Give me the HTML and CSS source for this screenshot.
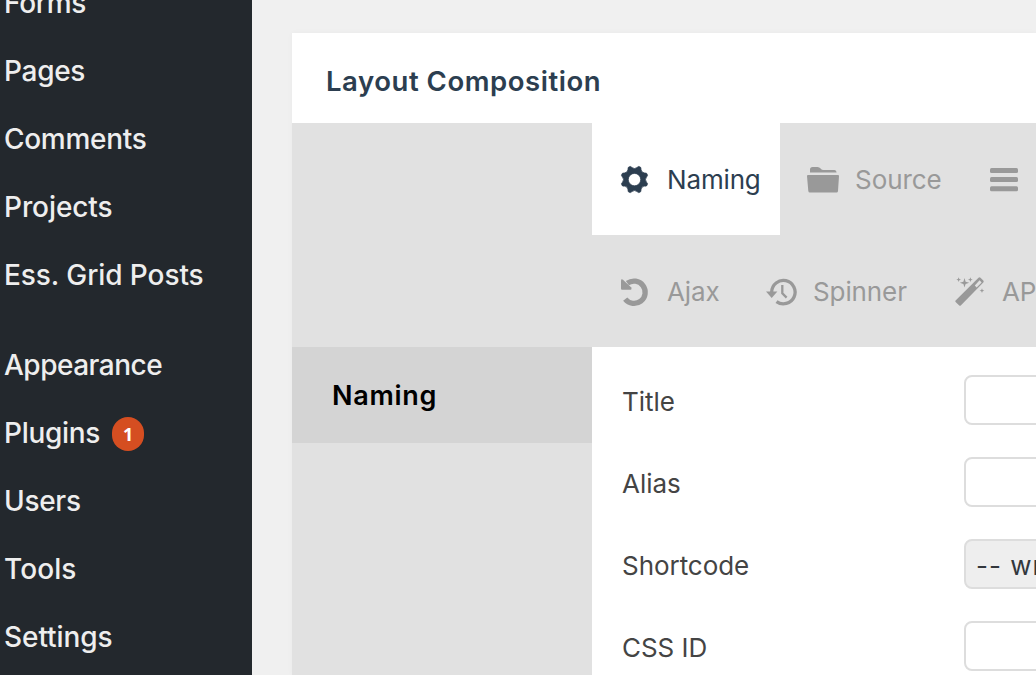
FILE: index.html
```html
<!DOCTYPE html>
<html lang="en">
<head>
<meta charset="utf-8">
<title>Layout Composition</title>
<link rel="stylesheet" href="styles.css">
</head>
<body>
<div class="app">
  <nav class="sidebar">
    <a class="menu-item">Forms</a>
    <a class="menu-item">Pages</a>
    <a class="menu-item">Comments</a>
    <a class="menu-item loose">Projects</a>
    <a class="menu-item loose">Ess. Grid Posts</a>
    <div class="menu-gap"></div>
    <a class="menu-item tight">Appearance</a>
    <a class="menu-item">Plugins <span class="count">1</span></a>
    <a class="menu-item">Users</a>
    <a class="menu-item tools">Tools</a>
    <a class="menu-item loose">Settings</a>
  </nav>
  <main class="content">
    <section class="panel">
      <h1 class="panel-title">Layout Composition</h1>
      <div class="tabs">
        <div class="tab-row">
          <div class="tab tab-active">
            <svg class="icon gear" viewBox="0 0 32 32"><path fill-rule="evenodd" d="M10.2 2.8Q11.7 1.8 12.9 3.5Q15.5 5.6 18.1 3.5Q19.3 1.8 20.8 2.8Q22.4 3.2 22 5.3Q22.4 8.7 25.7 9Q27.8 8.700 28.200 10.200Q29.200 11.700 27.500 13Q25.500 15.600 27.500 18.200Q29.200 19.400 28.200 20.900Q27.800 22.500 25.700 22.100Q22.400 22.400 22 25.800Q22.400 27.900 20.800 28.300Q19.300 29.200 18.100 27.600Q15.500 25.500 12.900 27.600Q11.700 29.200 10.200 28.300Q8.600 27.900 9 25.800Q8.600 22.400 5.300 22.100Q3.200 22.500 2.800 20.900Q1.800 19.400 3.500 18.200Q5.500 15.600 3.500 13Q1.800 11.700 2.800 10.200Q3.200 8.700 5.300 9Q8.600 8.700 9 5.300Q8.600 3.200 10.200 2.800ZM15.500 9.400a6.200 6.200 0 1 0 0 12.400a6.200 6.200 0 1 0 0-12.400Z"/></svg>
            <span>Naming</span>
          </div>
          <div class="tab tab-source">
            <svg class="icon" viewBox="0 0 32 32"><path d="M3 8.500V5.500Q3 3 5.500 3H10.500Q12.500 3 13.600 4.500T16.500 6H27.500Q29.500 6 29.600 8.500ZM0 12Q0 11 1 11H31Q32 11 32 12L31 27Q30.900 28.600 29.500 28.600H3Q1.500 28.600 1.300 27Z"/></svg>
            <span>Source</span>
          </div>
          <div class="tab tab-nav">
            <svg class="icon" viewBox="0 0 32 32"><rect x="2" y="4" width="28" height="5" rx="1.500"/><rect x="2" y="13" width="28" height="5" rx="1.500"/><rect x="2" y="22.300" width="28" height="5" rx="1.500"/></svg>
          </div>
        </div>
        <div class="tab-row">
          <div class="tab tab-ajax">
            <svg class="icon" viewBox="0 0 32 32"><path class="stroke thick" d="M6.200 23.200A11.200 11.200 0 1 0 8.400 7.200"/><path d="M2 4.500Q2.200 2.600 4 3.800L12 11.300Q13.300 13.300 11.500 13.800H3Q2 13.800 2 12.500Z"/></svg>
            <span>Ajax</span>
          </div>
          <div class="tab tab-spinner">
            <svg class="icon" viewBox="0 0 32 32"><path class="stroke" d="M5.700 16A11.700 11.700 0 1 1 10.500 25.600"/><path d="M0 15.600H11.400L5.700 22Z"/><path class="stroke hands" d="M16.300 9V17.200L20.600 21.600"/></svg>
            <span>Spinner</span>
          </div>
          <div class="tab tab-api">
            <svg class="icon" viewBox="0 0 32 32"><path fill-rule="evenodd" d="M1.600 24.500L24.500 1.700Q25.500 .700 26.500 1.700L29.300 4.500Q30.200 5.500 29.300 6.400L7 29.200Q6 30.200 5 29.200L1.600 26Q.900 25.300 1.600 24.500ZM20.800 9.600L22.600 11.500L27.600 6.400L25.600 4.300Z"/><path d="M10.500 2L11.600 5.700L15.200 6.800L11.600 7.900L10.500 11.600L9.400 7.900L5.800 6.800L9.400 5.700ZM4.700 1.200L5.300 3L7 3.700L5.300 4.300L4.700 6L4 4.300L2.300 3.700L4 3ZM16.400 1.200L17 3L18.700 3.700L17 4.300L16.400 6L15.700 4.300L14 3.700L15.700 3ZM28 12.300L28.600 14L30.300 14.700L28.600 15.300L28 17L27.300 15.300L25.600 14.700L27.300 14Z"/></svg>
            <span>API/JavaScript</span>
          </div>
        </div>
      </div>
      <div class="panel-body">
        <aside class="subnav"><div class="subnav-item">Naming</div></aside>
        <form class="fields">
          <div class="field"><label>Title</label><div class="input"></div></div>
          <div class="field"><label>Alias</label><div class="input"></div></div>
          <div class="field"><label>Shortcode</label><div class="input input-readonly">-- write alias --</div></div>
          <div class="field"><label>CSS ID</label><div class="input"></div></div>
        </form>
      </div>
    </section>
  </main>
</div>
</body>
</html>
```
FILE: styles.css
```css
* { box-sizing: border-box; }
body {
  margin: 0;
  background: #f0f0f0;
  font-family: Inter, "Liberation Sans", sans-serif;
  overflow: hidden;
}
.app { display: flex; width: 1036px; height: 675px; overflow: hidden; }
.sidebar {
  flex: none;
  width: 252px;
  margin-top: -31px;
  height: 706px;
  padding-left: 4px;
  background: #23282d;
}
.menu-item {
  display: flex;
  align-items: center;
  height: 68px;
  color: #eee;
  font-size: 28px;
  font-weight: 500;
  letter-spacing: -0.3px;
  white-space: nowrap;
}
.loose { letter-spacing: -0.08px; }
.tight { letter-spacing: -0.5px; }
.tools { letter-spacing: 0.1px; }
.menu-gap { height: 22px; }
.count {
  display: flex;
  align-items: center;
  justify-content: center;
  width: 32px;
  height: 34px;
  margin: 2px 0 0 12px;
  border-radius: 16px;
  background: #d54e21;
  color: #fff;
  font: 700 18px "Open Sans", sans-serif;
  letter-spacing: 0;
}
.content { flex: none; width: 784px; height: 675px; padding: 33px 0 0 40px; overflow: hidden; }
.panel { width: 744px; height: 642px; background: #fff; box-shadow: 0 0 6px rgba(0, 0, 0, 0.03); }
.panel-title {
  display: flex;
  align-items: center;
  height: 90px;
  margin: 0;
  padding: 6px 0 0 34px;
  color: #2c3e50;
  font-size: 27.500px;
  font-weight: 600;
  letter-spacing: 0.55px;
}
.tabs { padding-left: 300px; background: #e1e1e1; overflow: hidden; }
.tab-row { display: flex; width: 444px; }
.tab {
  flex: none;
  display: flex;
  align-items: center;
  gap: 16px;
  height: 112px;
  padding: 2px 20px 0 26px;
  color: #999;
  font-size: 26px;
  white-space: nowrap;
}
.tab span { padding-bottom: 1px; letter-spacing: -0.1px; }
.tab-active { width: 188px; padding-left: 27px; background: #fff; color: #2c3e50; }
.tab-active span { letter-spacing: -0.15px; }
.tab-source { width: 182px; padding-left: 27px; }
.tab-source span { letter-spacing: -0.05px; }
.tab-nav { padding-left: 26px; }
.tab-ajax { width: 146px; padding-left: 27px; }
.tab-spinner { width: 188px; padding-left: 28px; gap: 15px; }
.tab-api { padding-left: 28px; }
.icon { flex: none; width: 32px; height: 32px; fill: currentColor; }
.gear { stroke: currentColor; stroke-width: 0.7px; }
.stroke { fill: none; stroke: currentColor; stroke-width: 3.300px; }
.thick { stroke-width: 5.300px; }
.hands { stroke-width: 2.300px; }
.panel-body { display: flex; height: 328px; }
.subnav { flex: none; width: 300px; background: #e1e1e1; }
.subnav-item {
  display: flex;
  align-items: center;
  height: 96px;
  padding: 1px 0 0 40px;
  background: #d4d4d4;
  color: #000;
  font-size: 27px;
  font-weight: 600;
  letter-spacing: 0.7px;
}
.fields { flex: none; width: 444px; padding: 28px 0 0 30px; }
.field { display: flex; align-items: center; height: 50px; margin-bottom: 32px; }
.field label { flex: none; width: 342px; padding-top: 2px; color: #444; font-size: 26px; letter-spacing: -0.05px; }
.input {
  flex: none;
  width: 300px;
  height: 50px;
  padding: 8px 10px;
  border: 2px solid #ddd;
  border-radius: 8px;
  background: #fff;
  color: #32373c;
  font-size: 26px;
  letter-spacing: 1px;
  line-height: 34px;
  white-space: nowrap;
}
.input-readonly { background: #eee; }
```
